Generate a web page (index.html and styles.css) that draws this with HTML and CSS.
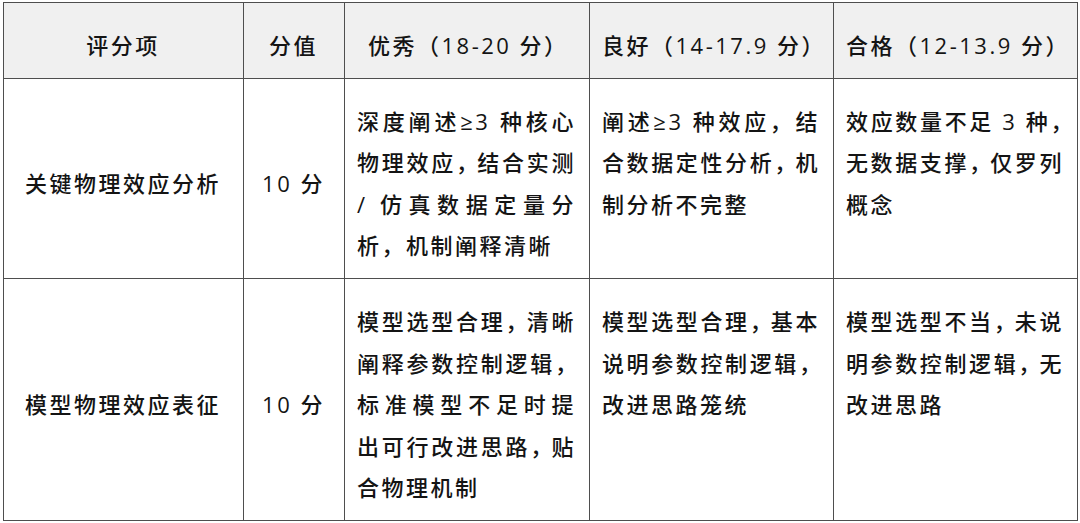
FILE: index.html
```html
<!DOCTYPE html>
<html lang="zh-CN">
<head>
<meta charset="utf-8">
<title>评分表</title>
<link rel="stylesheet" href="styles.css">
</head>
<body>
<table class="rubric">
  <colgroup>
    <col class="c-item">
    <col class="c-score">
    <col class="c-first">
    <col class="c-level">
    <col class="c-level">
  </colgroup>
  <thead>
    <tr>
      <th class="center">评分项</th>
      <th class="center">分值</th>
      <th class="h-first">优秀（18-20 分）</th>
      <th>良好（14-17.9 分）</th>
      <th>合格（12-13.9 分）</th>
    </tr>
  </thead>
  <tbody>
    <tr>
      <td class="center mid">关键物理效应分析</td>
      <td class="center mid">10 分</td>
      <td>深度阐述≥3 种核心物理效应<span class="pc">，</span>结合实测 / 仿真数据定量分析，机制阐释清晰</td>
      <td>阐述≥3 种效应，结合数据定性分析<span class="pc">，</span>机制分析不完整</td>
      <td>效应数量不足 3 种<span class="pe">，</span>无数据支撑<span class="pc">，</span>仅罗列概念</td>
    </tr>
    <tr>
      <td class="center mid">模型物理效应表征</td>
      <td class="center mid">10 分</td>
      <td>模型选型合理<span class="pc">，</span>清晰阐释参数控制逻辑<span class="pc">，</span>标准模型不足时提出可行改进思路<span class="pc">，</span>贴合物理机制</td>
      <td>模型选型合理<span class="pc">，</span>基本说明参数控制逻辑<span class="pc">，</span>改进思路笼统</td>
      <td>模型选型不当<span class="pc">，</span>未说明参数控制逻辑<span class="pc">，</span>无改进思路</td>
    </tr>
  </tbody>
</table>
</body>
</html>
```

FILE: styles.css
```css
html, body {
  margin: 0;
  padding: 0;
  background: #ffffff;
}

body {
  padding: 2px 0 0 3px;
  font-family: "Open Sans", "Liberation Sans", "Noto Sans CJK SC", sans-serif;
  color: #141414;
}

.rubric {
  border-collapse: collapse;
  width: 1074px;
  table-layout: fixed;
  font-size: 22px;
  font-weight: 500;
  letter-spacing: 2.5px;
  line-height: 41.6px;
}

.c-item { width: 240px; }
.c-score { width: 101px; }
.c-first { width: 245px; }
.c-level { width: 244px; }

.rubric th,
.rubric td {
  border: 1px solid #4e4e4e;
  padding: 22px 13px 11px 12px;
  text-align: justify;
  vertical-align: top;
  font-weight: 500;
}

/* slightly compressed punctuation, as the source document sets it */
.rubric .pc {
  font-feature-settings: "halt" 1;
  letter-spacing: 10px;
}

/* half-width punctuation at a line end */
.rubric .pe {
  font-feature-settings: "halt" 1;
}

.rubric thead th {
  background: #f0f0f0;
  text-align: left;
  vertical-align: middle;
}

.rubric .center {
  text-align: center;
}

.rubric .mid {
  vertical-align: middle;
}

.rubric thead .h-first {
  padding-left: 23px;
}
```
